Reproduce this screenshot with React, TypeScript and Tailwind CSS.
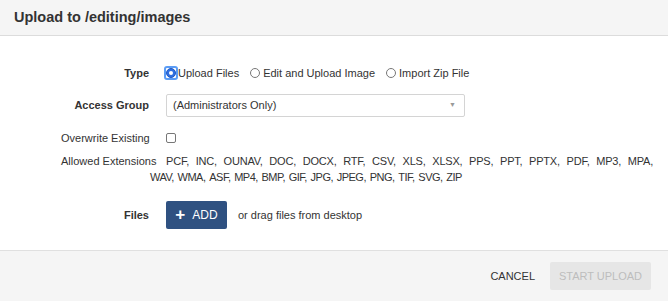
import React from "react";

export default function App() {
  const font = { fontFamily: '"Liberation Sans", Arial, Helvetica, sans-serif' };
  return (
    <div style={font} className="w-[668px] h-[301px] bg-white text-[#333] flex flex-col overflow-hidden">
      <div className="h-[36px] shrink-0 bg-[#f5f5f5] border-b border-[#dcdcdc] flex items-center pl-[14px]">
        <span className="text-[14.5px] font-bold text-[#333]">Upload to /editing/images</span>
      </div>
      <div className="flex-1 flex flex-col pt-[27px] text-[11px]">
        {/* Type */}
        <div className="flex items-center h-[20px]">
          <div className="w-[150px] text-right font-bold pr-[1px]">Type</div>
          <div className="flex items-center pl-[14px]">
            <span className="w-[14px] h-[14px] border-2 border-[#5b9cf5] rounded-[3px] flex items-center justify-center">
              <span className="w-[10px] h-[10px] rounded-full bg-[#2f6fe0] border border-[#1d57c4] flex items-center justify-center">
                <span className="w-[4px] h-[4px] rounded-full bg-white" />
              </span>
            </span>
            <span>Upload Files</span>
            <span className="w-[10px] h-[10px] rounded-full border border-[#777] ml-[11px] mr-[3px]" />
            <span>Edit and Upload Image</span>
            <span className="w-[10px] h-[10px] rounded-full border border-[#777] ml-[11px] mr-[3px]" />
            <span>Import Zip File</span>
          </div>
        </div>
        {/* Access Group */}
        <div className="flex items-center mt-[11px]">
          <div className="w-[150px] text-right font-bold pr-[1px]">Access Group</div>
          <div className="ml-[16px] w-[299px] h-[23px] border border-[#d4d4d4] rounded-[2px] flex items-center justify-between pl-[6px] pr-[8px]">
            <span>(Administrators Only)</span>
            <span className="text-[#999] text-[7px]">▼</span>
          </div>
        </div>
        {/* Overwrite */}
        <div className="flex items-center h-[16px] mt-[13px]">
          <div className="w-[150px] pl-[61px] whitespace-nowrap">Overwrite Existing</div>
          <span className="ml-[16px] w-[10px] h-[10px] border border-[#777] rounded-[2px]" />
        </div>
        {/* Allowed Extensions */}
        <div className="flex items-start mt-[7px] leading-[16px]">
          <div className="w-[150px] pl-[61px] shrink-0 whitespace-nowrap">Allowed Extensions</div>
          <div className="w-[503px] flex flex-col">
            <div className="ml-[16px] w-[487px] whitespace-nowrap flex justify-between tracking-[-0.2px]">
              {["PCF,", "INC,", "OUNAV,", "DOC,", "DOCX,", "RTF,", "CSV,", "XLS,", "XLSX,", "PPS,", "PPT,", "PPTX,", "PDF,", "MP3,", "MPA,"].map((e) => (
                <span key={e}>{e}</span>
              ))}
            </div>
            <div className="w-[312px] whitespace-nowrap flex justify-between tracking-[-0.5px]">
              {["WAV,", "WMA,", "ASF,", "MP4,", "BMP,", "GIF,", "JPG,", "JPEG,", "PNG,", "TIF,", "SVG,", "ZIP"].map((e) => (
                <span key={e}>{e}</span>
              ))}
            </div>
          </div>
        </div>
        {/* Files */}
        <div className="flex items-center mt-[16px]">
          <div className="w-[150px] text-right font-bold pr-[1px]">Files</div>
          <button className="ml-[16px] h-[28px] w-[61px] bg-[#2f5181] text-white text-[12px] flex items-center justify-center gap-[7px] rounded-[2px]">
            <span className="text-[17px] font-bold leading-none -mt-[2px]">+</span>
            <span>ADD</span>
          </button>
          <span className="ml-[11px]">or drag files from desktop</span>
        </div>
      </div>
      <div className="h-[51px] shrink-0 bg-[#f5f5f5] border-t border-[#e0e0e0] flex items-center justify-end pr-[17px] text-[11px]">
        <span className="text-[#333] mr-[15px]">CANCEL</span>
        <div className="w-[101px] h-[28px] bg-[#e6e6e6] text-[#bdbdbd] flex items-center justify-center rounded-[2px]">START UPLOAD</div>
      </div>
    </div>
  );
}
